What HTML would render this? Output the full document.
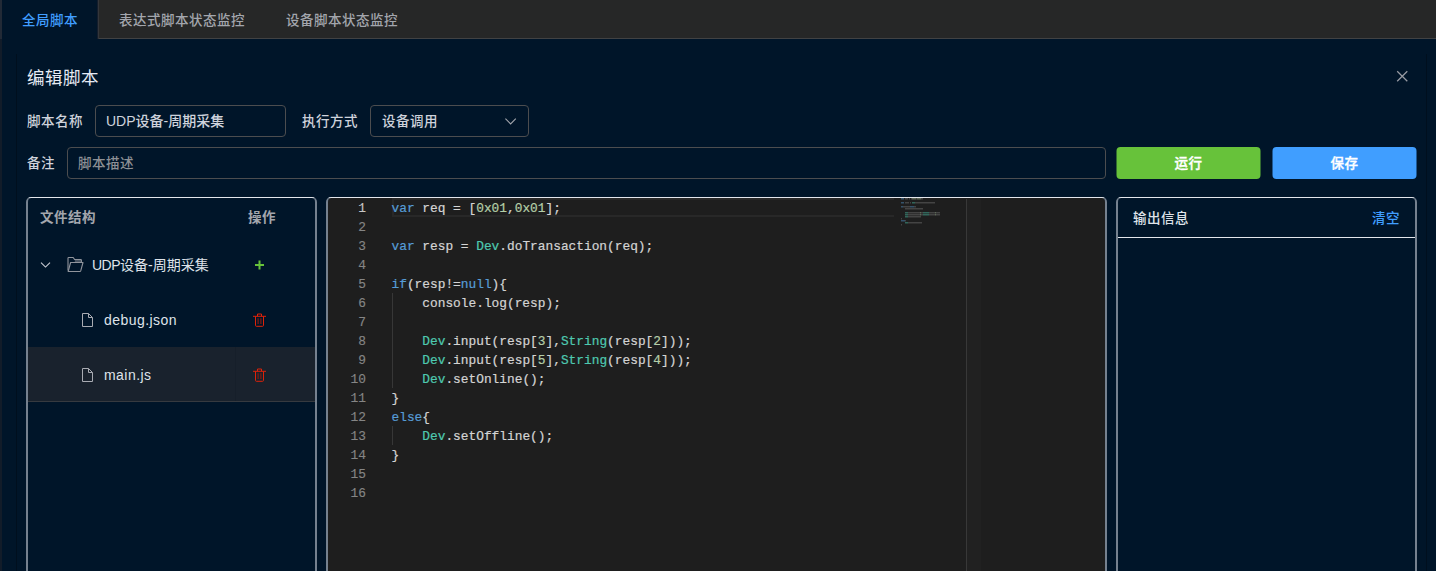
<!DOCTYPE html>
<html lang="zh-CN">
<head>
<meta charset="utf-8">
<title>编辑脚本</title>
<style>
*{box-sizing:border-box;margin:0;padding:0}
html,body{width:1436px;height:571px;overflow:hidden;background:#001529}
body{position:relative;font-family:"Liberation Sans","Noto Sans CJK SC",sans-serif;font-size:14px;color:#cfd3dc;-webkit-font-smoothing:antialiased}
.abs{position:absolute}
.z{font-size:13.5px!important;letter-spacing:.5px;font-weight:500}

/* tab header */
.tabbar{position:absolute;left:0;top:0;width:1436px;height:39px;background:#262727;border-bottom:1px solid #414243}
.edge-top{position:absolute;left:0;top:0;width:2px;height:39px;background:#222a36}
.edge-bot{position:absolute;left:0;top:39px;width:2px;height:532px;background:#121c29}
.tab{position:absolute;top:0;height:39px;line-height:41px;font-size:14px;color:#a3a6ad;white-space:nowrap}
.tab.active{left:2px;width:97px;height:39px;background:#001529;color:#409eff;padding-left:20px;border-right:1px solid #33363b;box-shadow:inset -1px 0 0 #141d2b}

/* dialog */
.dialog{position:absolute;left:16px;top:54px;width:1411px;height:540px;background:#001529;border-left:1px solid #000f1e;border-right:1px solid #000f1e}
.title{position:absolute;left:27px;top:65px;height:26px;line-height:26px;font-size:17.5px;letter-spacing:.5px;font-weight:400;color:#e5eaf3;white-space:nowrap}
.close{position:absolute;left:1396px;top:70px}
.label{position:absolute;height:32px;line-height:34px;font-size:14px;color:#cfd3dc;white-space:nowrap}
.input{position:absolute;height:32px;border:1px solid #4c4d4f;border-radius:4px;line-height:30px;font-size:14px;color:#cfd3dc;padding-left:10px;white-space:nowrap;background:#001529}
.ph{color:#8d9095}
.input.z{line-height:32px}
.btn{letter-spacing:.5px;position:absolute;transform:translateX(-.5px);top:147px;height:32px;border-radius:4px;color:#fff;font-size:13.5px;font-weight:500;-webkit-text-stroke:.35px;line-height:34px;text-align:center}

/* panels */
.panel{position:absolute;top:197px;height:384px;border-top:1px solid #e3e6ec;border-left:2px solid #75818f;border-right:2px solid #75818f;border-radius:5px 5px 0 0}
.th{position:absolute;font-size:13.5px;letter-spacing:.5px;font-weight:700;color:#a3a6ad;height:20px;line-height:20px;white-space:nowrap}
.tree{position:absolute;font-size:14px;color:#dfe3ea;height:22px;line-height:22px;white-space:nowrap;letter-spacing:.45px}
.tree.root{letter-spacing:0}

/* editor */
.editor{position:absolute;left:326px;top:197px;width:781px;height:384px;background:#1e1e1e;background-clip:padding-box;border-top:1px solid #e3e6ec;border-left:2px solid #75818f;border-right:2px solid #75818f;border-radius:5px 5px 0 0;overflow:hidden}
.editor .in{position:absolute;left:-2px;top:0;width:781px;height:374px}
.ln,.cl{position:absolute;height:19px;line-height:19px;font-family:"Liberation Mono","DejaVu Sans Mono",monospace;font-size:12.83px;white-space:pre}
.ln{left:0;width:40px;text-align:right;color:#858585;-webkit-text-stroke:.15px}
.ln.act{color:#c6c6c6}
.cl{left:65.5px;color:#d4d4d4;-webkit-text-stroke:.2px}
.cl .k{color:#569cd6}.cl .t{color:#4ec9b0}.cl .n{color:#b5cea8}
.curline{position:absolute;left:66px;top:0;width:502px;height:19px;border-top:2px solid #282828;border-bottom:2px solid #282828;border-left:2px solid #282828}
.guide{position:absolute;left:66px;width:1px;background:#373737}
.mm{position:absolute;left:575px;top:0px}
.ruler-line{position:absolute;left:640px;top:1px;width:1px;height:373px;background:#383838}
.ruler{position:absolute;left:641px;top:1px;width:14px;height:373px;background:#212121}
</style>
</head>
<body>

<!-- tabs -->
<div class="tabbar"></div>
<div class="tab active z">全局脚本</div>
<div class="tab z" style="left:119px">表达式脚本状态监控</div>
<div class="tab z" style="left:286px">设备脚本状态监控</div>
<div class="edge-top"></div>
<div class="edge-bot"></div>

<!-- dialog -->
<div class="dialog"></div>
<div class="title">编辑脚本</div>
<svg class="close" width="13" height="13" viewBox="0 0 13 13"><path d="M1.2 1.2 L11.3 11.3 M11.3 1.2 L1.2 11.3" stroke="#979ba3" stroke-width="1.25" fill="none"/></svg>

<!-- row 1 -->
<div class="label z" style="left:27px;top:105px">脚本名称</div>
<div class="input" style="left:95px;top:105px;width:191px;font-weight:500">UDP设备-周期采集</div>
<div class="label z" style="left:302px;top:105px">执行方式</div>
<div class="input z" style="left:370px;top:105px;width:159px;padding-left:11px">设备调用</div>
<svg class="abs" style="left:504px;top:117px" width="14" height="9" viewBox="0 0 14 9"><path d="M1.4 1.7 L6.6 6.9 L11.8 1.7" stroke="#a3a6ad" stroke-width="1.1" fill="none"/></svg>

<!-- row 2 -->
<div class="label z" style="left:27px;top:147px">备注</div>
<div class="input ph z" style="left:67px;top:147px;width:1039px">脚本描述</div>
<div class="btn" style="left:1117px;width:144px;background:#67c23a">运行</div>
<div class="btn" style="left:1273px;width:144px;background:#409eff">保存</div>

<!-- left panel -->
<div class="panel" style="left:26px;width:291px"></div>
<div class="th" style="left:40px;top:208px">文件结构</div>
<div class="th" style="left:248px;top:208px">操作</div>

<!-- root row -->
<svg class="abs" style="left:39px;top:260px" width="13" height="10" viewBox="0 0 13 10"><path d="M2 2.7 L6.5 7.1 L11 2.7" stroke="#c8ccd4" stroke-width="1.1" fill="none"/></svg>
<svg class="abs" style="left:67px;top:256px" width="18" height="17" viewBox="0 0 18 17"><path d="M7.8 3.5 H14.4 V6.5 H7.8Z" fill="#90949c" opacity=".5"/><g stroke="#90949c" stroke-width="1.1" fill="none" stroke-linejoin="round"><path d="M1 14.5 L1 2.2 Q1 1.5 1.7 1.5 L6.2 1.5 L7.6 3.5 L13.6 3.5 Q14.4 3.5 14.4 4.3 L14.4 6.3"/><path d="M1.2 15.5 L3.6 6.5 L16 6.5 L13.7 14.9 Q13.5 15.5 12.9 15.5 Z"/></g></svg>
<div class="tree root" style="left:92px;top:254px"><span style="letter-spacing:-.5px">UDP</span>设备-周期采集</div>
<svg class="abs" style="left:254px;top:260px" width="11" height="11" viewBox="0 0 11 11"><path d="M5.5 0.5 L5.5 9.5 M1 5 L10 5" stroke="#67c23a" stroke-width="2" fill="none"/></svg>

<!-- debug.json row -->
<svg class="abs" style="left:81px;top:312px" width="14" height="16" viewBox="0 0 14 16"><path d="M1.5 1.5 L7.5 1.5 L11.5 5.5 L11.5 14.5 L1.5 14.5 Z M7.5 1.5 L7.5 5.5 L11.5 5.5" stroke="#a8abb2" stroke-width="1" fill="none"/></svg>
<div class="tree" style="left:104px;top:309px">debug.json</div>
<svg class="abs del" style="left:252px;top:312px" width="15" height="16" viewBox="0 0 15 16"><g stroke="#de2209" stroke-width="1" fill="none"><path d="M1 4.3 L14 4.3"/><path d="M5.5 4.3 L5.5 2 L9.5 2 L9.5 4.3"/><path d="M3.5 4.3 L3.5 13.4 Q3.5 14.3 4.4 14.3 L10.6 14.3 Q11.5 14.3 11.5 13.4 L11.5 4.3"/></g><path d="M6.1 6.2 L6.1 12 M8.9 6.2 L8.9 12" stroke="#8a1c10" stroke-width="1.1" fill="none"/></svg>

<!-- main.js row (selected) -->
<div class="abs" style="left:28px;top:347px;width:287px;height:55px;background:#19222d;border-bottom:1px solid #363a40"></div>
<div class="abs" style="left:235px;top:347px;width:1px;height:54px;background:#161f2a"></div>
<svg class="abs" style="left:81px;top:367px" width="14" height="16" viewBox="0 0 14 16"><path d="M1.5 1.5 L7.5 1.5 L11.5 5.5 L11.5 14.5 L1.5 14.5 Z M7.5 1.5 L7.5 5.5 L11.5 5.5" stroke="#a8abb2" stroke-width="1" fill="none"/></svg>
<div class="tree" style="left:104px;top:364px">main.js</div>
<svg class="abs del" style="left:252px;top:367px" width="15" height="16" viewBox="0 0 15 16"><g stroke="#de2209" stroke-width="1" fill="none"><path d="M1 4.3 L14 4.3"/><path d="M5.5 4.3 L5.5 2 L9.5 2 L9.5 4.3"/><path d="M3.5 4.3 L3.5 13.4 Q3.5 14.3 4.4 14.3 L10.6 14.3 Q11.5 14.3 11.5 13.4 L11.5 4.3"/></g><path d="M6.1 6.2 L6.1 12 M8.9 6.2 L8.9 12" stroke="#8a1c10" stroke-width="1.1" fill="none"/></svg>

<!-- editor -->
<div class="editor"><div class="in">
<div class="curline"></div>
<div class="guide" style="top:95px;height:95px"></div>
<div class="guide" style="top:228px;height:19px"></div>
<div class="ln act" style="top:1px">1</div>
<div class="ln" style="top:20px">2</div>
<div class="ln" style="top:39px">3</div>
<div class="ln" style="top:58px">4</div>
<div class="ln" style="top:77px">5</div>
<div class="ln" style="top:96px">6</div>
<div class="ln" style="top:115px">7</div>
<div class="ln" style="top:134px">8</div>
<div class="ln" style="top:153px">9</div>
<div class="ln" style="top:172px">10</div>
<div class="ln" style="top:191px">11</div>
<div class="ln" style="top:210px">12</div>
<div class="ln" style="top:229px">13</div>
<div class="ln" style="top:248px">14</div>
<div class="ln" style="top:267px">15</div>
<div class="ln" style="top:286px">16</div>
<div class="cl" style="top:1px"><span class="k">var </span><span>req = [</span><span class="n">0x01</span><span>,</span><span class="n">0x01</span><span>];</span></div>
<div class="cl" style="top:20px"></div>
<div class="cl" style="top:39px"><span class="k">var </span><span>resp = </span><span class="t">Dev</span><span>.doTransaction(req);</span></div>
<div class="cl" style="top:58px"></div>
<div class="cl" style="top:77px"><span class="k">if</span><span>(resp!=</span><span class="k">null</span><span>){</span></div>
<div class="cl" style="top:96px"><span>    </span><span>console.log(resp);</span></div>
<div class="cl" style="top:115px"></div>
<div class="cl" style="top:134px"><span>    </span><span class="t">Dev</span><span>.input(resp[</span><span class="n">3</span><span>],</span><span class="t">String</span><span>(resp[</span><span class="n">2</span><span>]));</span></div>
<div class="cl" style="top:153px"><span>    </span><span class="t">Dev</span><span>.input(resp[</span><span class="n">5</span><span>],</span><span class="t">String</span><span>(resp[</span><span class="n">4</span><span>]));</span></div>
<div class="cl" style="top:172px"><span>    </span><span class="t">Dev</span><span>.setOnline();</span></div>
<div class="cl" style="top:191px"><span>}</span></div>
<div class="cl" style="top:210px"><span class="k">else</span><span>{</span></div>
<div class="cl" style="top:229px"><span>    </span><span class="t">Dev</span><span>.setOffline();</span></div>
<div class="cl" style="top:248px"><span>}</span></div>
<div class="cl" style="top:267px"></div>
<div class="cl" style="top:286px"></div>
<svg class="mm" width="66" height="40" viewBox="0 0 66 40"><rect x="0" y="0.3" width="3" height="1.05" fill="#569cd6" opacity="0.6"/><rect x="4" y="0.3" width="3" height="1.05" fill="#d4d4d4" opacity="0.3"/><rect x="8" y="0.3" width="1" height="1.05" fill="#d4d4d4" opacity="0.3"/><rect x="10" y="0.3" width="1" height="1.05" fill="#d4d4d4" opacity="0.3"/><rect x="11" y="0.3" width="4" height="1.05" fill="#b5cea8" opacity="0.6"/><rect x="15" y="0.3" width="1" height="1.05" fill="#d4d4d4" opacity="0.3"/><rect x="16" y="0.3" width="4" height="1.05" fill="#b5cea8" opacity="0.6"/><rect x="20" y="0.3" width="1" height="1.05" fill="#d4d4d4" opacity="0.3"/><rect x="21" y="0.3" width="1" height="1.05" fill="#d4d4d4" opacity="0.3"/><rect x="0" y="4.3" width="3" height="1.05" fill="#569cd6" opacity="0.6"/><rect x="4" y="4.3" width="4" height="1.05" fill="#d4d4d4" opacity="0.3"/><rect x="9" y="4.3" width="1" height="1.05" fill="#d4d4d4" opacity="0.3"/><rect x="11" y="4.3" width="3" height="1.05" fill="#4ec9b0" opacity="0.6"/><rect x="14" y="4.3" width="1" height="1.05" fill="#d4d4d4" opacity="0.3"/><rect x="15" y="4.3" width="13" height="1.05" fill="#d4d4d4" opacity="0.3"/><rect x="28" y="4.3" width="1" height="1.05" fill="#d4d4d4" opacity="0.3"/><rect x="29" y="4.3" width="3" height="1.05" fill="#d4d4d4" opacity="0.3"/><rect x="32" y="4.3" width="1" height="1.05" fill="#d4d4d4" opacity="0.3"/><rect x="33" y="4.3" width="1" height="1.05" fill="#d4d4d4" opacity="0.3"/><rect x="0" y="8.3" width="2" height="1.05" fill="#569cd6" opacity="0.6"/><rect x="2" y="8.3" width="1" height="1.05" fill="#d4d4d4" opacity="0.3"/><rect x="3" y="8.3" width="4" height="1.05" fill="#d4d4d4" opacity="0.3"/><rect x="7" y="8.3" width="1" height="1.05" fill="#d4d4d4" opacity="0.3"/><rect x="8" y="8.3" width="1" height="1.05" fill="#d4d4d4" opacity="0.3"/><rect x="9" y="8.3" width="4" height="1.05" fill="#569cd6" opacity="0.6"/><rect x="13" y="8.3" width="1" height="1.05" fill="#d4d4d4" opacity="0.3"/><rect x="14" y="8.3" width="1" height="1.05" fill="#d4d4d4" opacity="0.3"/><rect x="4" y="10.3" width="7" height="1.05" fill="#d4d4d4" opacity="0.3"/><rect x="11" y="10.3" width="1" height="1.05" fill="#d4d4d4" opacity="0.3"/><rect x="12" y="10.3" width="3" height="1.05" fill="#d4d4d4" opacity="0.3"/><rect x="15" y="10.3" width="1" height="1.05" fill="#d4d4d4" opacity="0.3"/><rect x="16" y="10.3" width="4" height="1.05" fill="#d4d4d4" opacity="0.3"/><rect x="20" y="10.3" width="1" height="1.05" fill="#d4d4d4" opacity="0.3"/><rect x="21" y="10.3" width="1" height="1.05" fill="#d4d4d4" opacity="0.3"/><rect x="4" y="14.3" width="3" height="1.05" fill="#4ec9b0" opacity="0.6"/><rect x="7" y="14.3" width="1" height="1.05" fill="#d4d4d4" opacity="0.3"/><rect x="8" y="14.3" width="5" height="1.05" fill="#d4d4d4" opacity="0.3"/><rect x="13" y="14.3" width="1" height="1.05" fill="#d4d4d4" opacity="0.3"/><rect x="14" y="14.3" width="4" height="1.05" fill="#d4d4d4" opacity="0.3"/><rect x="18" y="14.3" width="1" height="1.05" fill="#d4d4d4" opacity="0.3"/><rect x="19" y="14.3" width="1" height="1.05" fill="#b5cea8" opacity="0.6"/><rect x="20" y="14.3" width="1" height="1.05" fill="#d4d4d4" opacity="0.3"/><rect x="21" y="14.3" width="1" height="1.05" fill="#d4d4d4" opacity="0.3"/><rect x="22" y="14.3" width="6" height="1.05" fill="#4ec9b0" opacity="0.6"/><rect x="28" y="14.3" width="1" height="1.05" fill="#d4d4d4" opacity="0.3"/><rect x="29" y="14.3" width="4" height="1.05" fill="#d4d4d4" opacity="0.3"/><rect x="33" y="14.3" width="1" height="1.05" fill="#d4d4d4" opacity="0.3"/><rect x="34" y="14.3" width="1" height="1.05" fill="#b5cea8" opacity="0.6"/><rect x="35" y="14.3" width="1" height="1.05" fill="#d4d4d4" opacity="0.3"/><rect x="36" y="14.3" width="1" height="1.05" fill="#d4d4d4" opacity="0.3"/><rect x="37" y="14.3" width="1" height="1.05" fill="#d4d4d4" opacity="0.3"/><rect x="38" y="14.3" width="1" height="1.05" fill="#d4d4d4" opacity="0.3"/><rect x="4" y="16.3" width="3" height="1.05" fill="#4ec9b0" opacity="0.6"/><rect x="7" y="16.3" width="1" height="1.05" fill="#d4d4d4" opacity="0.3"/><rect x="8" y="16.3" width="5" height="1.05" fill="#d4d4d4" opacity="0.3"/><rect x="13" y="16.3" width="1" height="1.05" fill="#d4d4d4" opacity="0.3"/><rect x="14" y="16.3" width="4" height="1.05" fill="#d4d4d4" opacity="0.3"/><rect x="18" y="16.3" width="1" height="1.05" fill="#d4d4d4" opacity="0.3"/><rect x="19" y="16.3" width="1" height="1.05" fill="#b5cea8" opacity="0.6"/><rect x="20" y="16.3" width="1" height="1.05" fill="#d4d4d4" opacity="0.3"/><rect x="21" y="16.3" width="1" height="1.05" fill="#d4d4d4" opacity="0.3"/><rect x="22" y="16.3" width="6" height="1.05" fill="#4ec9b0" opacity="0.6"/><rect x="28" y="16.3" width="1" height="1.05" fill="#d4d4d4" opacity="0.3"/><rect x="29" y="16.3" width="4" height="1.05" fill="#d4d4d4" opacity="0.3"/><rect x="33" y="16.3" width="1" height="1.05" fill="#d4d4d4" opacity="0.3"/><rect x="34" y="16.3" width="1" height="1.05" fill="#b5cea8" opacity="0.6"/><rect x="35" y="16.3" width="1" height="1.05" fill="#d4d4d4" opacity="0.3"/><rect x="36" y="16.3" width="1" height="1.05" fill="#d4d4d4" opacity="0.3"/><rect x="37" y="16.3" width="1" height="1.05" fill="#d4d4d4" opacity="0.3"/><rect x="38" y="16.3" width="1" height="1.05" fill="#d4d4d4" opacity="0.3"/><rect x="4" y="18.3" width="3" height="1.05" fill="#4ec9b0" opacity="0.6"/><rect x="7" y="18.3" width="1" height="1.05" fill="#d4d4d4" opacity="0.3"/><rect x="8" y="18.3" width="9" height="1.05" fill="#d4d4d4" opacity="0.3"/><rect x="17" y="18.3" width="1" height="1.05" fill="#d4d4d4" opacity="0.3"/><rect x="18" y="18.3" width="1" height="1.05" fill="#d4d4d4" opacity="0.3"/><rect x="19" y="18.3" width="1" height="1.05" fill="#d4d4d4" opacity="0.3"/><rect x="0" y="20.3" width="1" height="1.05" fill="#d4d4d4" opacity="0.3"/><rect x="0" y="22.3" width="4" height="1.05" fill="#569cd6" opacity="0.6"/><rect x="4" y="22.3" width="1" height="1.05" fill="#d4d4d4" opacity="0.3"/><rect x="4" y="24.3" width="3" height="1.05" fill="#4ec9b0" opacity="0.6"/><rect x="7" y="24.3" width="1" height="1.05" fill="#d4d4d4" opacity="0.3"/><rect x="8" y="24.3" width="10" height="1.05" fill="#d4d4d4" opacity="0.3"/><rect x="18" y="24.3" width="1" height="1.05" fill="#d4d4d4" opacity="0.3"/><rect x="19" y="24.3" width="1" height="1.05" fill="#d4d4d4" opacity="0.3"/><rect x="20" y="24.3" width="1" height="1.05" fill="#d4d4d4" opacity="0.3"/><rect x="0" y="26.3" width="1" height="1.05" fill="#d4d4d4" opacity="0.3"/></svg>
<div class="ruler-line"></div>
<div class="ruler"></div>
</div></div>

<!-- output panel -->
<div class="panel" style="left:1116px;width:301px"></div>
<div class="abs" style="left:1118px;top:237px;width:297px;height:1px;background:#e3e6ec"></div>
<div class="abs" style="left:1133px;top:209px;height:20px;line-height:20px;font-size:13.5px;letter-spacing:.5px;color:#dfe3ea;font-weight:500;white-space:nowrap">输出信息</div>
<div class="abs" style="left:1372px;top:209px;height:20px;line-height:20px;font-size:13.5px;letter-spacing:.5px;font-weight:500;color:#409eff;white-space:nowrap">清空</div>

</body>
</html>
